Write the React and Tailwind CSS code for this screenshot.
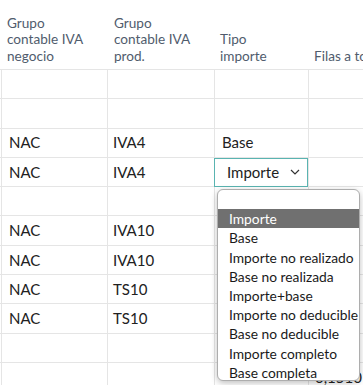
import React from "react";

const rows = [
  ["", "", ""],
  ["", "", ""],
  ["NAC", "IVA4", "Base"],
  ["NAC", "IVA4", "SELECT"],
  ["", "", ""],
  ["NAC", "IVA10", ""],
  ["NAC", "IVA10", ""],
  ["NAC", "TS10", ""],
  ["NAC", "TS10", ""],
  ["", "", ""],
  ["", "", "", "0,1510"],
];

const options = [
  "",
  "Importe",
  "Base",
  "Importe no realizado",
  "Base no realizada",
  "Importe+base",
  "Importe no deducible",
  "Base no deducible",
  "Importe completo",
  "Base completa",
];

export default function App() {
  return (
    <div
      className="relative w-[363px] h-[385px] overflow-hidden bg-white text-[#212121]"
      style={{ fontFamily: 'Lato, "Open Sans", sans-serif' }}
    >
      {/* header */}
      <div className="flex h-[70px] border-b border-[#e5e5e5] items-end pb-[5px] text-[13.6px] leading-[16.5px] text-[#505c6d]">
        <div className="w-[107px] shrink-0 pl-[7px]">Grupo<br />contable IVA<br />negocio</div>
        <div className="w-[107px] shrink-0 pl-[7px]">Grupo<br />contable IVA<br />prod.</div>
        <div className="w-[94px] shrink-0 pl-[6px]">Tipo<br />importe</div>
        <div className="flex-1 pl-[6px] whitespace-nowrap">Filas a totalizar</div>
      </div>
      {rows.map((r, i) => (
        <div key={i} className="flex h-[29.3px] border-b border-[#e5e5e5] text-[15px]">
          <div className="w-[1px] shrink-0" />
          <div className="w-[106px] shrink-0 border-l border-[#e5e5e5] pl-[7px] flex items-center">{r[0]}</div>
          <div className="w-[107px] shrink-0 border-l border-[#e5e5e5] pl-[5px] flex items-center">{r[1]}</div>
          <div className="w-[94px] shrink-0 border-l border-[#e5e5e5] flex items-center">
            {r[2] === "SELECT" ? (
              <div className="h-[29px] w-[95px] -ml-[1px] border border-[#5ab4b1] flex items-center justify-between pl-[12px] pr-[7px] text-[15px]">
                <span>Importe</span>
                <svg width="10" height="6" viewBox="0 0 10 6" fill="none" stroke="#333" strokeWidth="1.2">
                  <path d="M1 1l4 4 4-4" />
                </svg>
              </div>
            ) : (
              <span className="pl-[7px]">{r[2]}</span>
            )}
          </div>
          <div className="flex-1 border-l border-[#e5e5e5] pl-[6px] flex items-center">{r[3] || ""}</div>
        </div>
      ))}

      {/* dropdown list */}
      <div className="absolute left-[217px] top-[189px] w-[143px] h-[192px] overflow-hidden bg-white border border-[#adadad] rounded-[6px] shadow-[0_2px_6px_rgba(0,0,0,0.25)] text-[13.8px] text-[#1a1a1a]">
        {options.map((o, i) => (
          <div
            key={i}
            className={
              "h-[19.2px] leading-[19.2px] pl-[11px] whitespace-nowrap " +
              (i === 1 ? "bg-[#707070] text-white" : "")
            }
          >
            {o}
          </div>
        ))}
      </div>
    </div>
  );
}
